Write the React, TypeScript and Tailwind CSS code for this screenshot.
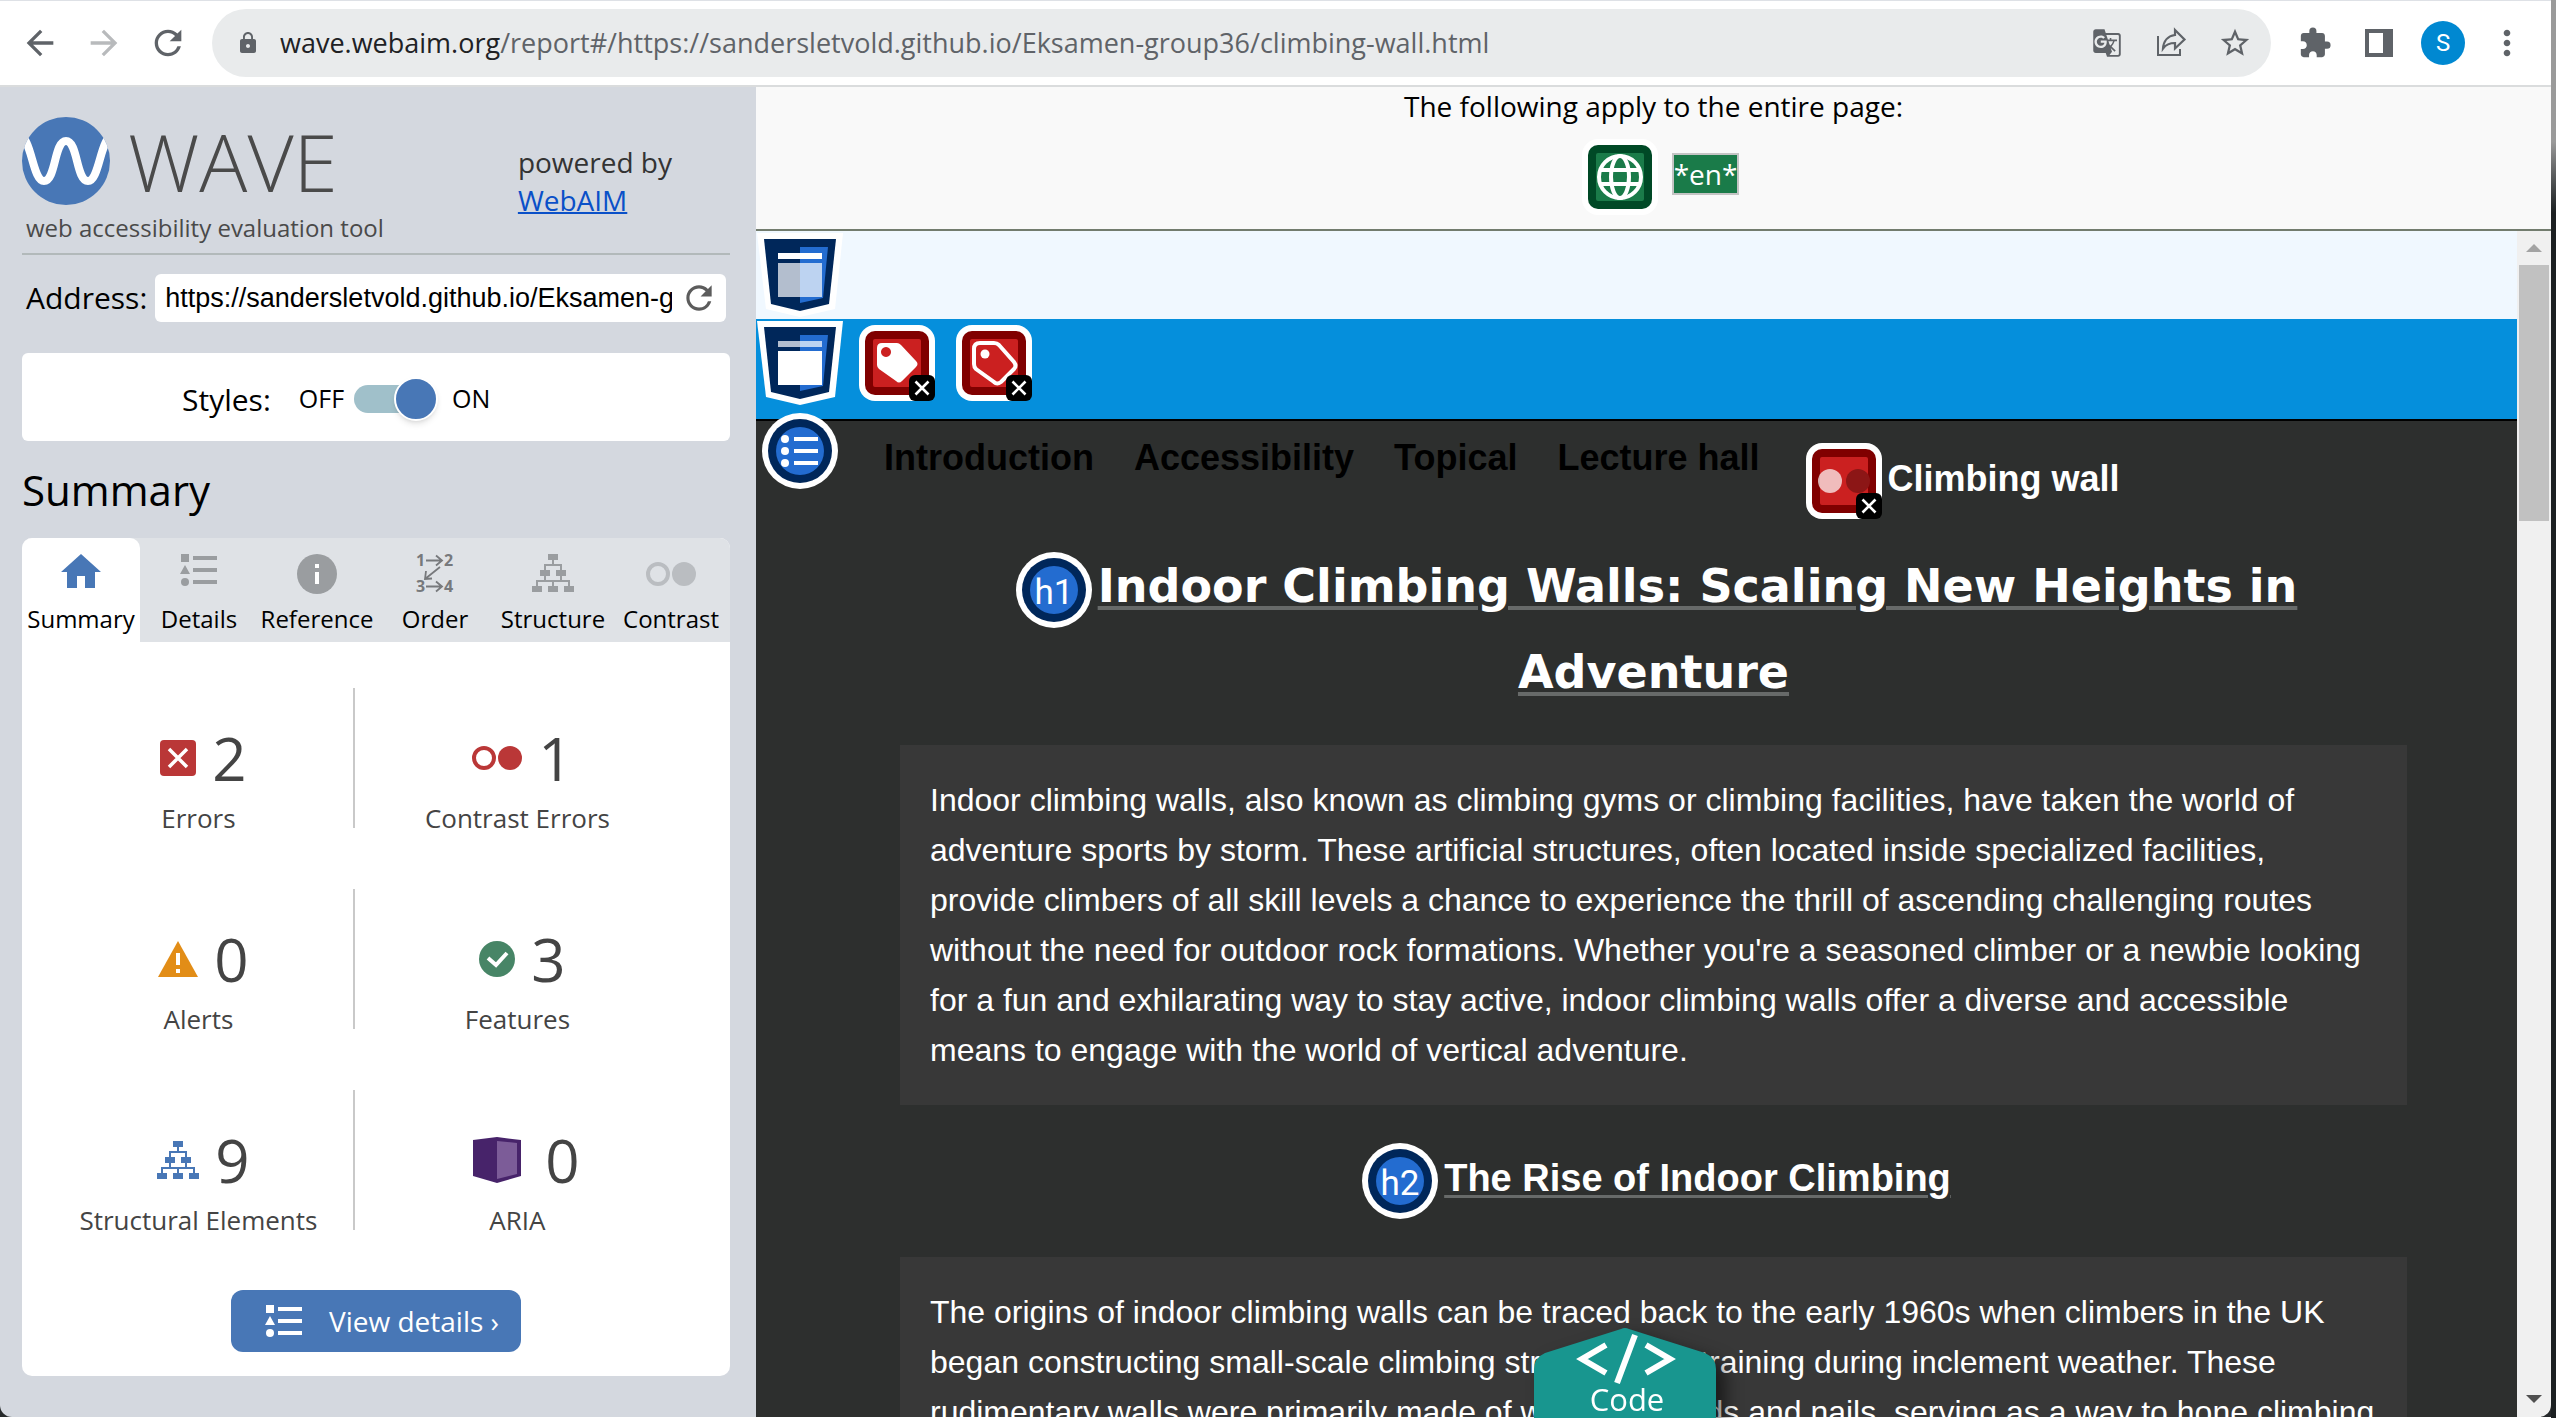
import type { ReactNode } from "react";
import { MdArrowBack, MdArrowForward, MdExtension, MdGTranslate, MdLock, MdMoreVert, MdRefresh, MdStarBorder } from "react-icons/md";

const NAVY = "#00275a";
const BLUE = "#236cd0";

function ShareIcon() {
  return (
    <svg width="32" height="32" viewBox="0 0 32 32" fill="none" stroke="#5f6368" strokeWidth="2">
      <path d="M3 9v19h22v-6" />
      <path d="M20 3l9.500 9.500-9.500 9v-5.500c-5 0-9 1.500-12 5.500 .5-7 4.500-12.500 12-13.500z" strokeWidth="2.200" />
    </svg>
  );
}

function PanelIcon() {
  return (
    <svg width="28" height="28" viewBox="0 0 28 28" fill="#5f6368">
      <path fillRule="evenodd" d="M0 0h28v28H0zM4 4v20h14V4z" />
    </svg>
  );
}

function TreeIcon({ className }: { className: string }) {
  return (
    <svg className={className} width="42" height="38" viewBox="0 0 42 38" fill="currentColor">
      <path d="M16 0h10v6H16zM8 16h10v6H8zM24 16h10v6H24zM0 32h10v6H0zM16 32h10v6H16zM32 32h10v6H32z" />
      <path d="M21 6v5M13 16v-5h16v5M13 22v5M29 22v5M5 32v-5h32v5M21 27v5" fill="none" stroke="currentColor" strokeWidth="2" />
    </svg>
  );
}

function ListShapesIcon({ className }: { className: string }) {
  return (
    <svg className={className} width="38" height="32" viewBox="0 0 38 32" fill="currentColor">
      <path d="M1 0h8v8H1zM5 11l5 9H0zM13 2h24v4H13zM13 14h24v4H13zM13 26h24v4H13z" />
      <circle cx="5" cy="28" r="4" />
    </svg>
  );
}

function ContrastIcon({ className }: { className: string }) {
  return (
    <svg className={className} width="50" height="24" viewBox="0 0 50 24">
      <circle cx="12" cy="12" r="10" fill="none" stroke="currentColor" strokeWidth="4" />
      <circle cx="38" cy="12" r="12" fill="currentColor" />
    </svg>
  );
}

function HomeIcon() {
  return (
    <svg width="40" height="34" viewBox="0 0 40 34" fill="#4877b6">
      <path d="M20 0l20 18h-6v16H24V22h-8v12H6V18H0z" />
    </svg>
  );
}

function InfoIcon() {
  return (
    <svg width="40" height="40" viewBox="0 0 40 40">
      <circle cx="20" cy="20" r="20" fill="#9a9da0" />
      <path d="M18 10h4v4h-4zM18 18h4v12h-4z" fill="#fff" />
    </svg>
  );
}

function OrderIcon() {
  return (
    <svg width="40" height="40" viewBox="0 0 40 40" fill="none" stroke="#77797c">
      <g fill="#77797c" stroke="none" fontFamily="Open Sans" fontWeight="700" fontSize="16">
        <text x="1" y="12">1</text>
        <text x="29" y="12">2</text>
        <text x="1" y="38">3</text>
        <text x="29" y="38">4</text>
      </g>
      <path d="M11 6.500h16M21 1.500l6 5-6 5M11 32.500h16M21 27.500l6 5-6 5M25 13L10 25M11 17l-1 8 7-.5" strokeWidth="1.800" />
    </svg>
  );
}

function ShieldIcon({ label, part }: { label: string; part: "header" | "main" }) {
  const header = part === "header";
  return (
    <svg role="img" aria-label={label} className="shrink-0" width="88" height="84" viewBox="0 0 88 84">
      <path d="M1 0h86l-8 76-35 8-34-8z" fill="#fff" />
      <path d="M8 6h72l-7 65-29 7-29-7z" fill={NAVY} />
      <path d="M44 14h28l-5 51-23 5z" fill={BLUE} />
      <path d="M22 20h44v6H22z" fill="#fff" fillOpacity={header ? 1 : 0.7} />
      <path d="M22 30h44v34H22z" fill="#fff" fillOpacity={header ? 0.7 : 1} />
    </svg>
  );
}

function CircleIcon({ label, children }: { label: string; children: ReactNode }) {
  return (
    <svg role="img" aria-label={label} className="mx-1.5 inline-block shrink-0 align-middle" width="76" height="76" viewBox="0 0 76 76">
      <circle cx="38" cy="38" r="38" fill="#fff" />
      <circle cx="38" cy="38" r="32" fill={NAVY} />
      <circle cx="38" cy="38" r="24" fill={BLUE} />
      {children}
    </svg>
  );
}

function HeadingIcon({ level }: { level: string }) {
  return (
    <CircleIcon label={`Heading level ${level}`}>
      <text x="38" y="52" textAnchor="middle" fontFamily="Roboto" fontWeight="400" fontSize="35" fill="#fff">
        h{level}
      </text>
    </CircleIcon>
  );
}

function SquareIcon({ label, dark, light, closable, children }: { label: string; dark: string; light: string; closable?: boolean; children: ReactNode }) {
  return (
    <svg role="img" aria-label={label} className="mx-1.5 inline-block shrink-0 align-middle" width="76" height="76" viewBox="0 0 76 76">
      <rect width="76" height="76" rx="16" fill="#fff" />
      <rect x="6" y="6" width="64" height="64" rx="10" fill={dark} />
      <rect x="14" y="14" width="48" height="48" rx="2" fill={light} />
      {children}
      {closable && (
        <>
          <rect x="50" y="50" width="26" height="26" rx="6" fill="#000" />
          <path d="M56.500 56.500l13 13M69.500 56.500l-13 13" stroke="#fff" strokeWidth="2.600" />
        </>
      )}
    </svg>
  );
}

const tabs: { label: string; icon: ReactNode }[] = [
  { label: "Summary", icon: <HomeIcon /> },
  { label: "Details", icon: <ListShapesIcon className="text-[#9a9da0]" /> },
  { label: "Reference", icon: <InfoIcon /> },
  { label: "Order", icon: <OrderIcon /> },
  { label: "Structure", icon: <TreeIcon className="text-[#9a9da0]" /> },
  { label: "Contrast", icon: <ContrastIcon className="mt-2 text-[#babdc1]" /> },
];

const rows = [
  [
    {
      label: "Errors",
      count: 2,
      icon: (
        <svg width="36" height="36" viewBox="0 0 36 36">
          <rect width="36" height="36" rx="4" fill="#ba3737" />
          <path d="M9 9l18 18M27 9L9 27" stroke="#fff" strokeWidth="3.500" />
        </svg>
      ),
    },
    { label: "Contrast Errors", count: 1, icon: <ContrastIcon className="text-[#ba3737]" /> },
  ],
  [
    {
      label: "Alerts",
      count: 0,
      icon: (
        <svg width="40" height="36" viewBox="0 0 40 36">
          <path d="M20 0l20 36H0z" fill="#e28d17" />
          <path d="M18 12h4v12h-4zM18 28h4v4h-4z" fill="#fff" />
        </svg>
      ),
    },
    {
      label: "Features",
      count: 3,
      icon: (
        <svg width="36" height="36" viewBox="0 0 36 36">
          <circle cx="18" cy="18" r="18" fill="#478566" />
          <path d="M9 17l8 7 11-12" fill="none" stroke="#fff" strokeWidth="4" />
        </svg>
      ),
    },
  ],
  [
    { label: "Structural Elements", count: 9, icon: <TreeIcon className="text-[#4877b6]" /> },
    {
      label: "ARIA",
      count: 0,
      icon: (
        <svg width="64" height="46" viewBox="-8 0 64 46">
          <path d="M0 3l24-3 24 3v36l-24 7-24-7z" fill="#47236a" />
          <path d="M24 4l20 2v31l-20 5z" fill="#7c5c98" />
        </svg>
      ),
    },
  ],
];

const links = ["Introduction", "Accessibility", "Topical", "Lecture hall"];

function BrowserBar() {
  return (
    <header className="flex shrink-0 items-center gap-6 border-t border-b-2 border-t-[#dee1e6] border-b-[#dadcdd] bg-white py-2 pr-6 pl-5 text-[#5f6368]">
      <button aria-label="Back" className="w-10"><MdArrowBack size={40} /></button>
      <button aria-label="Forward" className="w-10 text-[#b8babc]"><MdArrowForward size={40} /></button>
      <button aria-label="Reload" className="w-10"><MdRefresh size={40} /></button>
      <div className="flex h-17 min-w-0 flex-1 items-center rounded-full bg-[#e9ebec] pr-4 pl-6">
        <MdLock size={24} className="shrink-0" />
        <p className="ml-5 min-w-0 flex-1 truncate text-[27px] leading-9">
          <span className="text-[#202124]">wave.webaim.org</span>/report#/https://sandersletvold.github.io/Eksamen-group36/climbing-wall.html
        </p>
        <div className="flex gap-6">
          <button aria-label="Translate this page" className="flex size-10 items-center justify-center"><MdGTranslate size={30} /></button>
          <button aria-label="Share this page" className="flex size-10 items-center justify-center"><ShareIcon /></button>
          <button aria-label="Bookmark this tab" className="flex size-10 items-center justify-center"><MdStarBorder size={34} /></button>
        </div>
      </div>
      <button aria-label="Extensions" className="flex size-10 items-center justify-center"><MdExtension size={34} /></button>
      <button aria-label="Side panel" className="flex size-10 items-center justify-center"><PanelIcon /></button>
      <button aria-label="Profile" className="-mx-0.5 flex size-11 items-center justify-center rounded-full bg-[#0088d1] font-['Roboto',sans-serif] text-[24px] text-white">S</button>
      <button aria-label="Menu" className="flex size-10 items-center justify-center"><MdMoreVert size={40} /></button>
    </header>
  );
}

function Sidebar() {
  return (
    <aside className="w-[756px] shrink-0 rounded-bl-xl bg-[#d4d8df] pt-[30px] pr-[26px] pl-[22px]">
      <div className="flex items-start justify-between border-b-2 border-[#b2b9ba] pb-[5px]">
        <div>
          <div className="flex items-center gap-[18px] text-[#4a4a4a]">
            <svg role="img" aria-label="WAVE logo" width="88" height="88" viewBox="0 0 88 88">
              <clipPath id="logo-disc"><circle cx="44" cy="44" r="44" /></clipPath>
              <circle cx="44" cy="44" r="44" fill="#4877b6" />
              <path clipPath="url(#logo-disc)" d="M-4 18C10 18 10 64 22 64S32 24 44 24 54 64 66 64 78 18 92 18" fill="none" stroke="#fff" strokeWidth="8" />
            </svg>
            <h1 className="text-[80px] leading-[88px] font-light">WAVE</h1>
          </div>
          <p className="mt-[3px] ml-1 text-[24px] leading-10 text-[#4a4a4a]">web accessibility evaluation tool</p>
        </div>
        <p className="mt-[26px] mr-[58px] text-[28px] leading-[38px] text-[#333]">
          powered by
          <br />
          <a href="#webaim" className="text-[#0a50c8] underline decoration-2">WebAIM</a>
        </p>
      </div>

      <form className="mt-[19px] flex items-center px-1">
        <label htmlFor="address" className="mr-2 text-[30px] leading-10">Address:</label>
        <div className="flex h-12 min-w-0 flex-1 items-center rounded-md bg-white pr-2 pl-2.5">
          <input id="address" type="text" defaultValue="https://sandersletvold.github.io/Eksamen-group36/climbing-wall.html" className="min-w-0 flex-1 bg-transparent font-['Liberation_Sans',sans-serif] text-[27px]" />
          <button type="button" aria-label="Reload report" className="ml-2 text-[#5c5c5c]"><MdRefresh size={38} /></button>
        </div>
      </form>

      <div className="mt-[31px] flex h-22 items-center rounded-md bg-white pt-1 pl-40">
        <span id="styles-label" className="text-[30px]">Styles:</span>
        <span className="ml-7 text-[25px]">OFF</span>
        <input type="checkbox" role="switch" defaultChecked aria-labelledby="styles-label" className="relative ml-2.5 h-7 w-[82px] appearance-none rounded-full bg-[#a0c0ca] before:absolute before:-top-2 before:-right-0.5 before:size-11 before:rounded-full before:border-2 before:border-white before:bg-[#4877b6] before:shadow-md" />
        <span className="ml-4 text-[25px]">ON</span>
      </div>

      <h2 className="mt-[19px] text-[42px] leading-[60px]">Summary</h2>

      <section className="mt-[18px] rounded-[10px] bg-white">
        <div role="tablist" className="grid grid-cols-6 rounded-t-[10px] bg-[#dfe2e6]">
          {tabs.map((tab, i) => (
            <button key={tab.label} role="tab" aria-selected={i === 0} className="flex h-26 flex-col items-center rounded-t-[10px] pt-4 text-[24px] aria-selected:bg-white">
              <span className="flex h-10 items-start">{tab.icon}</span>
              <span className="mt-[9px] leading-8">{tab.label}</span>
            </button>
          ))}
        </div>
        <div className="flex flex-col items-center pt-[46px] pb-6">
          <div className="flex w-full flex-col gap-[53px] pr-[50px] pl-[22px]">
            {rows.map(([left, right]) => (
              <div key={left.label} className="grid grid-cols-[19fr_2px_20fr] items-start text-[#444]">
                <Count {...left} />
                <div className="h-[140px] bg-[#c9c9c9]" />
                <Count {...right} />
              </div>
            ))}
          </div>
          <button className="mt-[52px] flex h-[62px] items-center rounded-xl bg-[#4877b6] pr-[22px] pl-[34px] text-[28px] text-white">
            <ListShapesIcon className="text-white" />
            <span className="ml-[26px]">View details ›</span>
          </button>
        </div>
      </section>
    </aside>
  );
}

function Count({ label, count, icon }: { label: string; count: number; icon: ReactNode }) {
  return (
    <div className="flex flex-col items-center pt-10">
      <div className="flex items-center gap-4 pl-2.5 text-[60px] leading-[60px]">
        {icon}
        <span>{count}</span>
      </div>
      <p className="mt-3 text-[26px] leading-9">{label}</p>
    </div>
  );
}

function ReportPage() {
  return (
    <div className="min-w-0 flex-1 overflow-hidden bg-[#2d2f2e] font-['Liberation_Sans',sans-serif] text-white">
      <div className="h-22 bg-[#f0f8ff] pt-0.5">
        <ShieldIcon label="Header" part="header" />
      </div>
      <div className="flex h-[102px] items-start gap-[9px] border-b-2 border-black bg-[#058fdc] pt-0.5">
        <ShieldIcon label="Main content" part="main" />
        <div className="mt-1 flex gap-[9px]">
          <SquareIcon label="Missing form label" dark="#800000" light="#cb2020" closable>
            <path fillRule="evenodd" fill="#fff" d="M23 18h15q2 0 4 2l15 16q3 3 0 6L43 56q-3 3-6 0L20 44q-2-2-2-4V23q0-5 5-5zM27 22a5 5 0 1 0 .01 0z" />
          </SquareIcon>
          <SquareIcon label="Empty form label" dark="#800000" light="#cb2020" closable>
            <path d="M24 18h14q3 0 5 2l15 17q3 4 0 7L45 57q-4 3-7 0L20 44q-2-2-2-5V24q0-6 6-6z" fill="none" stroke="#fff" strokeWidth="4" />
            <circle cx="29" cy="29" r="4.500" fill="#fff" />
          </SquareIcon>
        </div>
      </div>

      <nav className="relative -mt-2 flex items-start text-[36px] leading-10 font-bold">
        <CircleIcon label="Unordered list">
          <path d="M32 24h24v4H32zM32 36h24v4H32zM32 48h24v4H32z" fill="#fff" />
          <circle cx="23" cy="26" r="4" fill="#fff" />
          <circle cx="23" cy="38" r="4" fill="#fff" />
          <circle cx="23" cy="50" r="4" fill="#fff" />
        </CircleIcon>
        <ul className="ml-10 flex items-start gap-x-10 text-black">
          {links.map((link) => (
            <li key={link} className="mt-[25px]"><a href="#page">{link}</a></li>
          ))}
          <li className="mt-[30px] text-white">
            <SquareIcon label="Very low contrast" dark="#800000" light="#cb2020" closable>
              <circle cx="24" cy="38" r="12" fill="#fff" fillOpacity="0.7" />
              <circle cx="52" cy="38" r="12" fill="#8c1616" />
            </SquareIcon>
            <a href="#page">Climbing wall</a>
          </li>
        </ul>
      </nav>

      <main className="mr-[110px] ml-36 pt-6">
        <h1 className="text-center font-['DejaVu_Sans',sans-serif] text-[46px] leading-[86px] font-bold">
          <HeadingIcon level="1" />
          <span className="underline decoration-[#676a69] decoration-4 underline-offset-4">Indoor Climbing Walls: Scaling New Heights in Adventure</span>
        </h1>
        <p className="mt-[30px] bg-[#383838] p-[30px] text-[32px] leading-[50px]">
          Indoor climbing walls, also known as climbing gyms or climbing facilities, have taken the world of adventure sports by storm. These artificial structures, often located inside specialized facilities, provide climbers of all skill levels a chance to experience the thrill of ascending challenging routes without the need for outdoor rock formations. Whether you're a seasoned climber or a newbie looking for a fun and exhilarating way to stay active, indoor climbing walls offer a diverse and accessible means to engage with the world of vertical adventure.
        </p>
        <h2 className="my-[38px] text-center text-[38px] leading-[66px] font-bold">
          <HeadingIcon level="2" />
          <span className="underline decoration-[#676a69] decoration-3 underline-offset-4">The Rise of Indoor Climbing</span>
        </h2>
        <p className="bg-[#383838] p-[30px] text-[32px] leading-[50px]">
          The origins of indoor climbing walls can be traced back to the early 1960s when climbers in the UK began constructing small-scale climbing structures for training during inclement weather. These rudimentary walls were primarily made of wooden boards and nails, serving as a way to hone climbing
        </p>
      </main>
    </div>
  );
}

function ScrollBar() {
  return (
    <div className="flex w-[34px] shrink-0 flex-col items-center rounded-br-xl bg-[#f0f0f0]">
      <svg className="my-[13px]" width="16" height="8" viewBox="0 0 16 8"><path d="M8 0l8 8H0z" fill="#a3a3a3" /></svg>
      <div className="h-64 w-[30px] bg-[#c1c1c1]" />
      <svg className="mt-auto mb-[14px]" width="16" height="8" viewBox="0 0 16 8"><path d="M0 0h16L8 8z" fill="#505050" /></svg>
    </div>
  );
}

export default function App() {
  return (
    <div className="flex h-screen overflow-hidden bg-[#26292b] font-['Open_Sans','Noto_Sans',sans-serif] text-black">
      <div className="flex min-w-0 flex-1 flex-col border-b border-white">
        <BrowserBar />
        <div className="flex min-h-0 flex-1">
          <Sidebar />
          <div className="relative flex min-w-0 flex-1 flex-col">
            <div className="flex h-36 shrink-0 flex-col items-center border-b-2 border-[#727c6e] bg-[#f9f9f9] text-[28px]">
              <p className="leading-[38px]">The following apply to the entire page:</p>
              <div className="mt-3.5 flex items-center pl-2">
                <SquareIcon label="Document language" dark="#004926" light="#1a7b49">
                  <g fill="none" stroke="#fff" strokeWidth="4">
                    <circle cx="38" cy="38" r="21" />
                    <ellipse cx="38" cy="38" rx="9" ry="21" />
                    <path d="M18 31h40M18 45h40" />
                  </g>
                </SquareIcon>
                <span className="mb-1.5 ml-2 border-2 border-[#c4c4c4] bg-[#1a7b49] leading-[38px] text-white">*en*</span>
              </div>
            </div>
            <div className="flex min-h-0 flex-1">
              <ReportPage />
              <ScrollBar />
            </div>
            <button className="absolute bottom-0 left-[778px] flex h-[89px] w-[182px] flex-col items-center text-[31px] text-white drop-shadow-[10px_8px_8px_rgba(0,0,0,0.5)]">
              <svg className="absolute inset-0" width="182" height="90" viewBox="0 0 182 90">
                <path d="M87 1q4-2 8 0l76 24q11 5 11 16v49H0V41q0-11 11-16z" fill="#18968f" />
                <path d="M72 17L48 31l24 14M112 17l24 14-24 14M101 7L83 55" fill="none" stroke="#fff" strokeWidth="6" />
              </svg>
              <span className="relative mt-auto pl-1 leading-9">Code</span>
            </button>
          </div>
        </div>
      </div>
      <div className="w-[5px] shrink-0 bg-linear-to-b from-[#9a9a9a] from-10% to-[#1c2022] to-15%" />
    </div>
  );
}
